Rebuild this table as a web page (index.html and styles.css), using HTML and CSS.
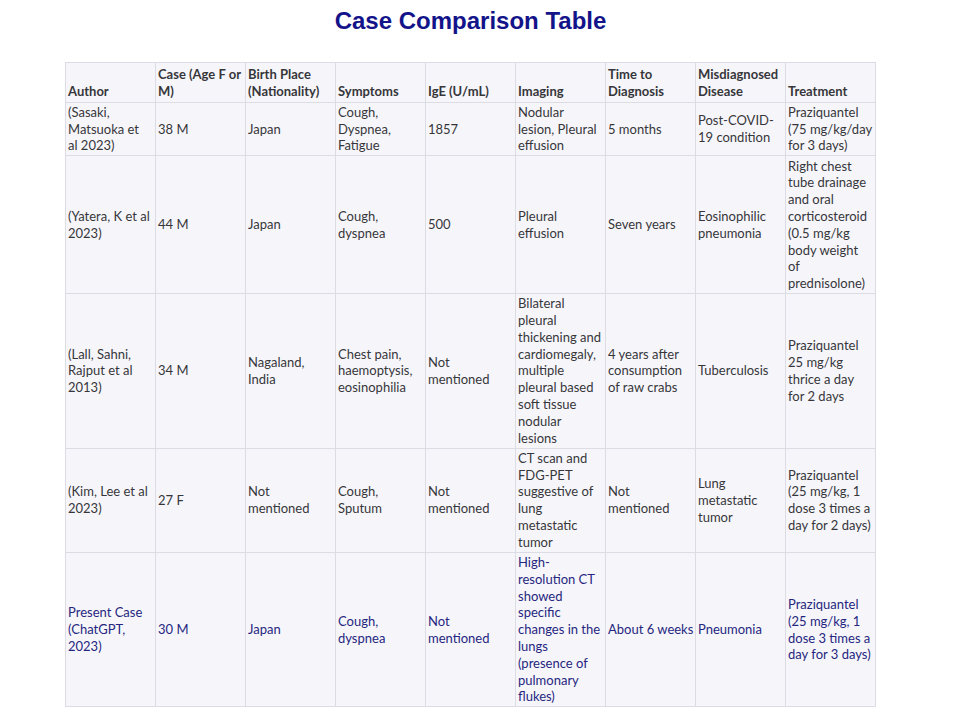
FILE: index.html
```html
<!DOCTYPE html>
<html>
<head>
<meta charset="utf-8">
<link rel="stylesheet" href="styles.css">
</head>
<body>
<div class="wrap">
  <h1 class="title">Case Comparison Table</h1>
  <table class="cases">
    <colgroup>
      <col><col><col><col><col><col><col><col><col>
    </colgroup>
    <thead>
      <tr>
        <th>Author</th>
        <th>Case (Age F or<br>M)</th>
        <th>Birth Place<br>(Nationality)</th>
        <th>Symptoms</th>
        <th>IgE (U/mL)</th>
        <th>Imaging</th>
        <th>Time to<br>Diagnosis</th>
        <th>Misdiagnosed<br>Disease</th>
        <th>Treatment</th>
      </tr>
    </thead>
    <tbody>
      <tr>
        <td>(Sasaki,<br>Matsuoka et<br>al 2023)</td>
        <td>38 M</td>
        <td>Japan</td>
        <td>Cough,<br>Dyspnea,<br>Fatigue</td>
        <td>1857</td>
        <td>Nodular<br>lesion, Pleural<br>effusion</td>
        <td>5 months</td>
        <td>Post-COVID-<br>19 condition</td>
        <td>Praziquantel<br>(75 mg/kg/day<br>for 3 days)</td>
      </tr>
      <tr>
        <td>(Yatera, K et al<br>2023)</td>
        <td>44 M</td>
        <td>Japan</td>
        <td>Cough,<br>dyspnea</td>
        <td>500</td>
        <td>Pleural<br>effusion</td>
        <td>Seven years</td>
        <td>Eosinophilic<br>pneumonia</td>
        <td>Right chest<br>tube drainage<br>and oral<br>corticosteroid<br>(0.5 mg/kg<br>body weight<br>of<br>prednisolone)</td>
      </tr>
      <tr>
        <td>(Lall, Sahni,<br>Rajput et al<br>2013)</td>
        <td>34 M</td>
        <td>Nagaland,<br>India</td>
        <td>Chest pain,<br>haemoptysis,<br>eosinophilia</td>
        <td>Not<br>mentioned</td>
        <td>Bilateral<br>pleural<br>thickening and<br>cardiomegaly,<br>multiple<br>pleural based<br>soft tissue<br>nodular<br>lesions</td>
        <td>4 years after<br>consumption<br>of raw crabs</td>
        <td>Tuberculosis</td>
        <td>Praziquantel<br>25 mg/kg<br>thrice a day<br>for 2 days</td>
      </tr>
      <tr>
        <td>(Kim, Lee et al<br>2023)</td>
        <td>27 F</td>
        <td>Not<br>mentioned</td>
        <td>Cough,<br>Sputum</td>
        <td>Not<br>mentioned</td>
        <td>CT scan and<br>FDG-PET<br>suggestive of<br>lung<br>metastatic<br>tumor</td>
        <td>Not<br>mentioned</td>
        <td>Lung<br>metastatic<br>tumor</td>
        <td>Praziquantel<br>(25 mg/kg, 1<br>dose 3 times a<br>day for 2 days)</td>
      </tr>
      <tr class="present">
        <td>Present Case<br>(ChatGPT,<br>2023)</td>
        <td>30 M</td>
        <td>Japan</td>
        <td>Cough,<br>dyspnea</td>
        <td>Not<br>mentioned</td>
        <td>High-<br>resolution CT<br>showed<br>specific<br>changes in the<br>lungs<br>(presence of<br>pulmonary<br>flukes)</td>
        <td>About 6 weeks</td>
        <td>Pneumonia</td>
        <td>Praziquantel<br>(25 mg/kg, 1<br>dose 3 times a<br>day for 3 days)</td>
      </tr>
    </tbody>
  </table>
</div>
</body>
</html>
```
FILE: styles.css
```css
html, body {
  margin: 0;
  padding: 0;
  background: #ffffff;
}
.wrap {
  width: 811px;
  margin-left: 65px;
  padding-top: 7px;
}
.title {
  margin: 0 0 27px 0;
  text-align: center;
  font-family: "Liberation Sans", Arial, sans-serif;
  font-weight: bold;
  font-size: 24px;
  line-height: 28px;
  color: #13138a;
}
.cases {
  border-collapse: collapse;
  table-layout: fixed;
  width: 811px;
  background: #f6f6fa;
  font-family: Lato, "Open Sans", sans-serif;
  font-size: 13px;
  line-height: 16.8px;
  color: #36363a;
}
.cases col {
  width: 90px;
}
.cases th,
.cases td {
  border: 1px solid #dcdce4;
  padding: 1.2px 2px 1.2px 2px;
  text-align: left;
  white-space: nowrap;
  overflow: visible;
}
.cases th {
  font-weight: bold;
  vertical-align: bottom;
  padding-top: 3px;
  padding-bottom: 2px;
}
.cases td {
  vertical-align: middle;
}
.cases .present td {
  color: #262680;
}
```
